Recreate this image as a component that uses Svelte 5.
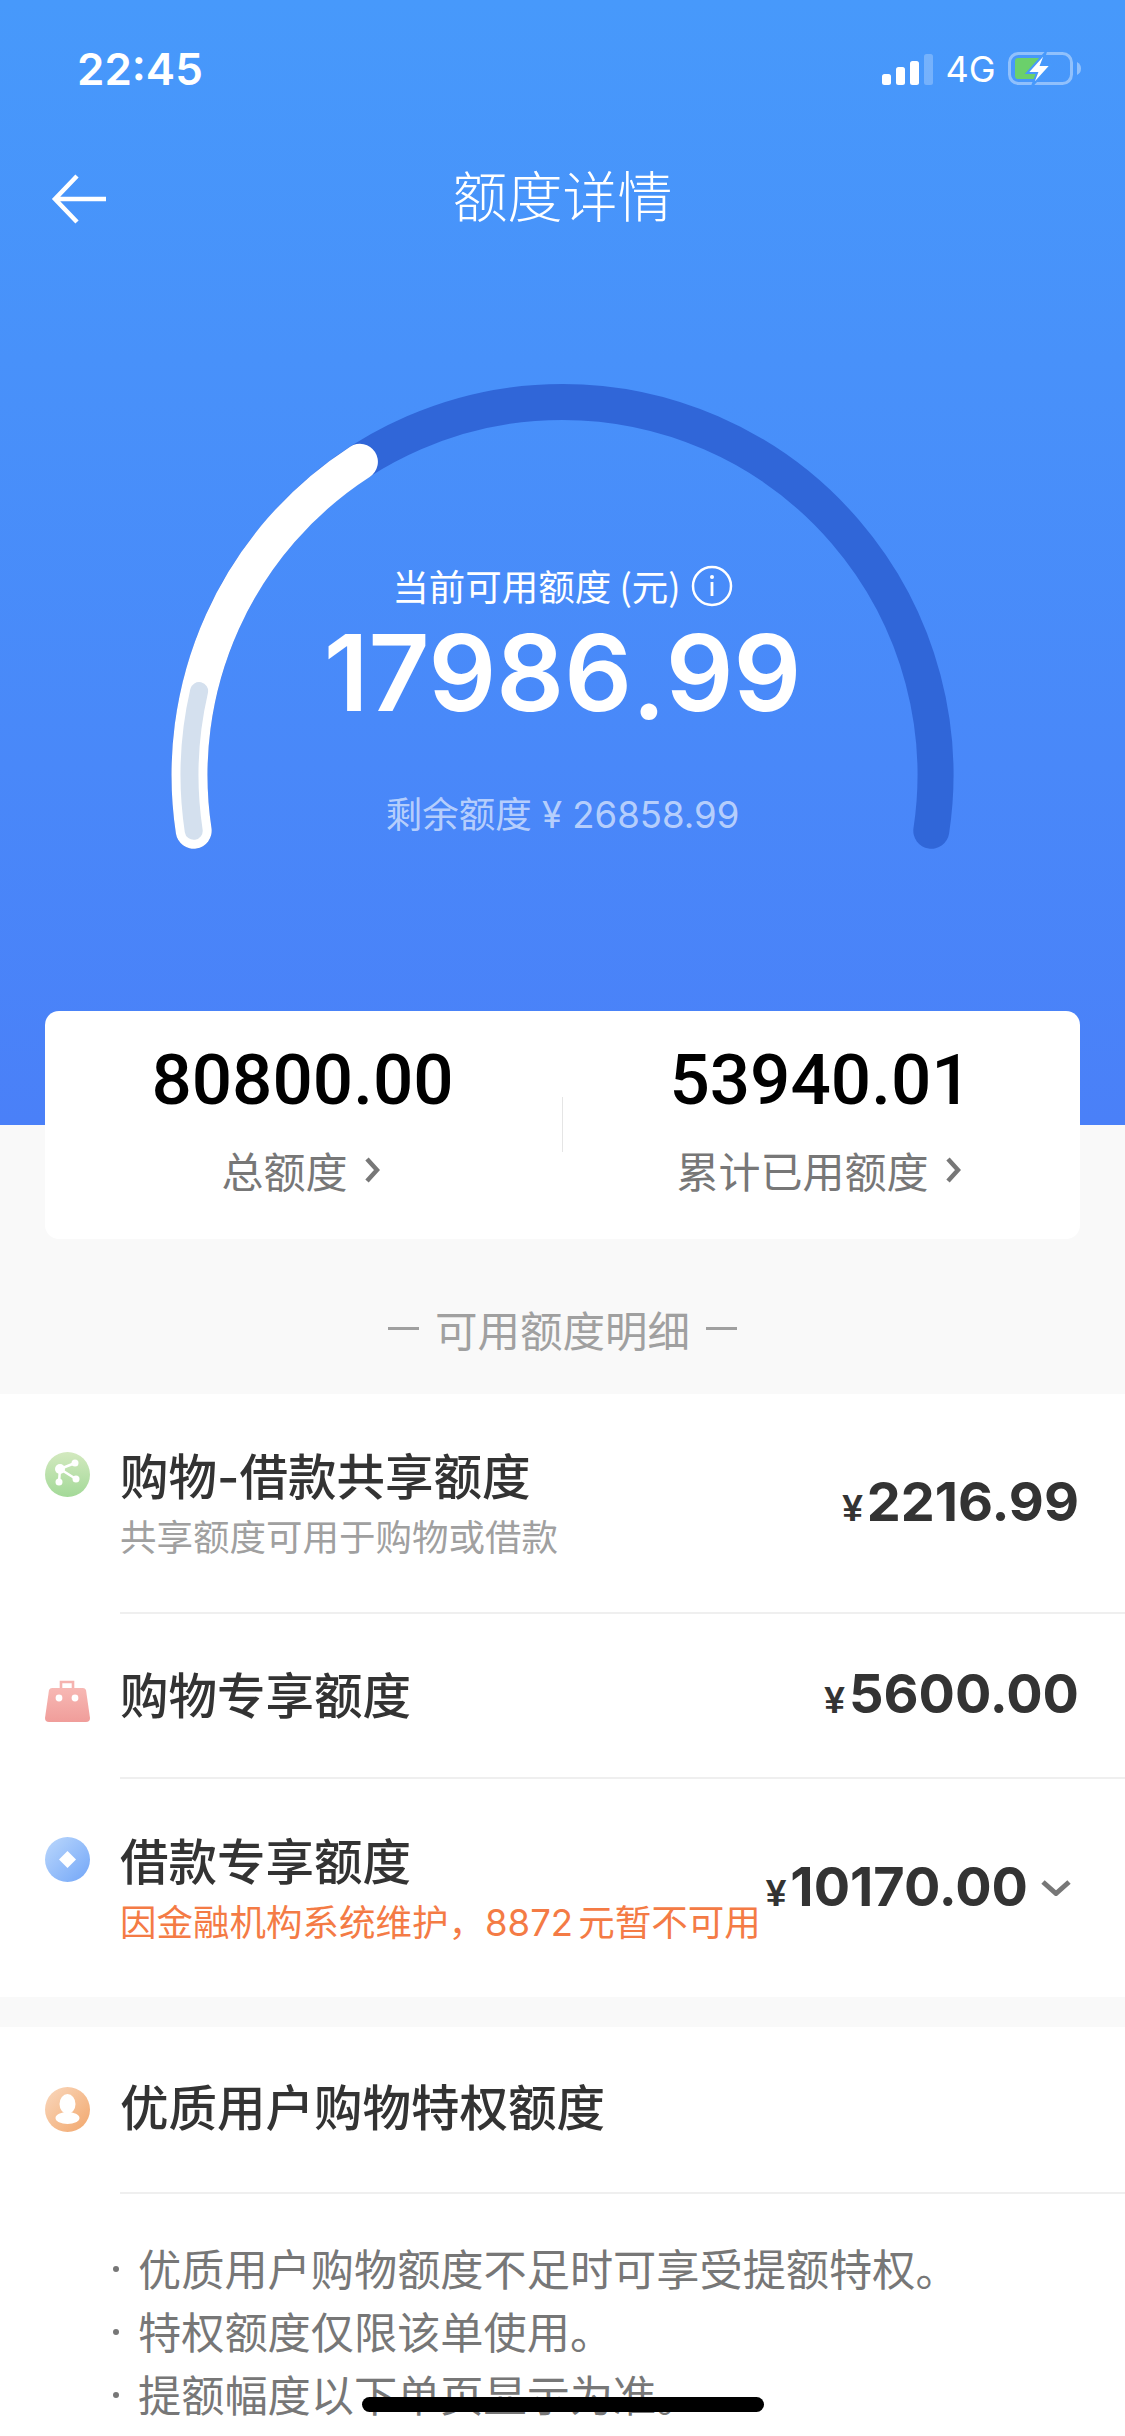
<script>
  const cx = 562.5;
  const cy = 775;
  const r = 373;

  // point on the gauge ring, angle in degrees from the left horizontal, clockwise
  function pt(deg) {
    const a = (deg * Math.PI) / 180;
    return `${(cx - r * Math.cos(a)).toFixed(1)} ${(cy - r * Math.sin(a)).toFixed(1)}`;
  }
  function arc(from, to) {
    const large = to - from > 180 ? 1 : 0;
    return `M${pt(from)} A${r} ${r} 0 ${large} 1 ${pt(to)}`;
  }

  const bullets = ["优质用户购物额度不足时可享受提额特权。", "特权额度仅限该单使用。", "提额幅度以下单页显示为准。"];
</script>

<div class="page">
  <section class="hero">
    <div class="status">
      <span class="time">22:45</span>
      <div class="status-right">
        <svg class="signal" width="51" height="31" viewBox="0 0 51 31">
          <rect x="0" y="20" width="9" height="11" rx="2.5" fill="#fff" />
          <rect x="14" y="13" width="9" height="18" rx="2.5" fill="#fff" />
          <rect x="28" y="7" width="9" height="24" rx="2.5" fill="#fff" />
          <rect x="42" y="0" width="9" height="31" rx="2.5" fill="#fff" opacity="0.25" />
        </svg>
        <span class="net">4G</span>
        <svg class="battery" width="73" height="36" viewBox="0 0 73 36">
          <rect x="1.5" y="2.5" width="62" height="30" rx="9" fill="none" stroke="#fff" stroke-opacity="0.4" stroke-width="3" />
          <path d="M69 11 Q73 13 73 17.5 Q73 22 69 24 Z" fill="#fff" opacity="0.4" />
          <rect x="7" y="7" width="26" height="21" rx="3" fill="#6bd06b" />
          <path d="M38 1 L19 22 L29 22 L24 35 L43 14 L33 14 Z" fill="#fff" stroke="#4799fb" stroke-width="2" />
        </svg>
      </div>
    </div>

    <div class="nav">
      <svg class="back" width="56" height="50" viewBox="0 0 56 50">
        <path d="M26 2 L4 25 L26 48 M4 25 H55" fill="none" stroke="#fff" stroke-width="4.5" />
      </svg>
      <h1>额度详情</h1>
    </div>

    <div class="gauge">
      <svg class="ring" width="1125" height="500" viewBox="0 350 1125 500">
        <path d={arc(-8.6, 188.6)} fill="none" stroke="#3066d8" stroke-width="36" stroke-linecap="round" />
        <path d={arc(-8.6, 57.1)} fill="none" stroke="#fff" stroke-width="36" stroke-linecap="round" />
        <path d={arc(-8.6, 13)} fill="none" stroke="#d4e0ee" stroke-width="18" stroke-linecap="round" />
      </svg>
      <div class="readout">
        <div class="label">
          <span>当前可用额度 (元)</span>
          <svg width="42" height="42" viewBox="0 0 42 42">
            <circle cx="21" cy="21" r="19" fill="none" stroke="#fff" stroke-width="2.5" />
            <circle cx="21" cy="12" r="2" fill="#fff" />
            <rect x="19.6" y="17" width="2.8" height="14" fill="#fff" />
          </svg>
        </div>
        <div class="big">17986<span class="dot">.</span>99</div>
        <div class="left">剩余额度 ¥ 26858.99</div>
      </div>
    </div>
  </section>

  <div class="summary">
    <div class="cell">
      <div class="num">80800.00</div>
      <div class="cap">总额度
        <svg width="16" height="26" viewBox="0 0 16 26"><path d="M3 2 L13 13 L3 24" fill="none" stroke="#777" stroke-width="4.5" /></svg>
      </div>
    </div>
    <div class="rule"></div>
    <div class="cell">
      <div class="num">53940.01</div>
      <div class="cap">累计已用额度
        <svg width="16" height="26" viewBox="0 0 16 26"><path d="M3 2 L13 13 L3 24" fill="none" stroke="#777" stroke-width="4.5" /></svg>
      </div>
    </div>
  </div>

  <div class="heading"><i></i>可用额度明细<i></i></div>

  <section class="panel">
    <div class="row first">
      <svg class="icon" width="45" height="45" viewBox="0 0 45 45">
        <defs><linearGradient id="g1" x1="0" y1="0" x2="0" y2="1"><stop offset="0" stop-color="#d3e9bf" /><stop offset="1" stop-color="#a3d998" /></linearGradient></defs>
        <circle cx="22.5" cy="22.5" r="22.5" fill="url(#g1)" />
        <path d="M15 17 L30 11 M15 17 L31 27 M15 17 L14 30" stroke="#fff" stroke-width="2.5" />
        <circle cx="15" cy="17" r="5" fill="#fff" /><circle cx="30" cy="11" r="3.5" fill="#fff" />
        <circle cx="31" cy="27" r="3.5" fill="#fff" /><circle cx="14" cy="30" r="3.5" fill="#fff" />
      </svg>
      <div class="body">
        <div class="text">
          <div class="title">购物-借款共享额度</div>
          <div class="sub">共享额度可用于购物或借款</div>
        </div>
        <div class="amount"><small>¥</small>2216.99</div>
      </div>
    </div>

    <div class="row second">
      <svg class="icon" width="45" height="43" viewBox="0 0 45 43">
        <defs><linearGradient id="g2" x1="0" y1="0" x2="0" y2="1"><stop offset="0" stop-color="#f7b8b4" /><stop offset="1" stop-color="#f09d9a" /></linearGradient></defs>
        <path d="M16 9 V2 H28 V9" fill="none" stroke="#f5b3af" stroke-width="2.6" />
        <path d="M7 8 H38 Q40 8 41 10 L45 38 Q45 42 41 42 H4 Q0 42 0 38 L4 10 Q5 8 7 8 Z" fill="url(#g2)" />
        <circle cx="14" cy="18" r="3.4" fill="#fff" /><circle cx="30" cy="18" r="3.4" fill="#fff" />
      </svg>
      <div class="body">
        <div class="text"><div class="title">购物专享额度</div></div>
        <div class="amount"><small>¥</small>5600.00</div>
      </div>
    </div>

    <div class="row third">
      <svg class="icon" width="45" height="45" viewBox="0 0 45 45">
        <defs><linearGradient id="g3" x1="0" y1="0" x2="1" y2="1"><stop offset="0" stop-color="#bcd8fc" /><stop offset="1" stop-color="#72a6f8" /></linearGradient></defs>
        <circle cx="22.5" cy="22.5" r="22.5" fill="url(#g3)" />
        <path d="M22.5 14 L31 22.5 L22.5 31 L14 22.5 Z" fill="#fff" />
      </svg>
      <div class="body">
        <div class="text">
          <div class="title">借款专享额度</div>
          <div class="sub warn">因金融机构系统维护，8872 元暂不可用</div>
        </div>
        <div class="amount"><small>¥</small>10170.00</div>
        <svg class="caret" width="30" height="16" viewBox="0 0 30 16"><path d="M2 2 L15 13.5 L28 2" fill="none" stroke="#777" stroke-width="5" /></svg>
      </div>
    </div>
  </section>

  <section class="panel privilege">
    <div class="row head">
      <svg class="icon" width="45" height="45" viewBox="0 0 45 45">
        <defs><linearGradient id="g4" x1="0" y1="0" x2="1" y2="1"><stop offset="0" stop-color="#f9d8be" /><stop offset="1" stop-color="#f2a76c" /></linearGradient></defs>
        <circle cx="22.5" cy="22.5" r="22.5" fill="url(#g4)" />
        <ellipse cx="22.5" cy="17" rx="8" ry="10" fill="#fff" />
        <ellipse cx="22.5" cy="31" rx="12" ry="6" fill="#fff" />
      </svg>
      <div class="title">优质用户购物特权额度</div>
    </div>
    <ul>
      {#each bullets as b}
        <li>{b}</li>
      {/each}
    </ul>
  </section>

  <div class="home"></div>
</div>

<style>
  :global(body) {
    margin: 0;
    background: #f9f9f9;
  }

  .page {
    position: relative;
    width: 1125px;
    height: 2436px;
    overflow: hidden;
    font-family: "Noto Sans CJK SC", sans-serif;
    background: #f9f9f9;
  }

  .hero {
    height: 1125px;
    background: linear-gradient(#4799fb, #4a80f8);
    color: #fff;
  }

  .status {
    display: flex;
    justify-content: space-between;
    align-items: center;
    height: 40px;
    padding: 49px 44px 0 77px;
  }

  .time {
    font: 600 44px Inter, sans-serif;
  }

  .status-right {
    display: flex;
    align-items: center;
    gap: 12.5px;
  }

  .net {
    font: 400 36px Inter, sans-serif;
  }

  .nav {
    display: flex;
    align-items: center;
    justify-content: center;
    position: relative;
    height: 60px;
    margin-top: 74px;
  }

  .back {
    position: absolute;
    left: 51px;
    top: 11px;
  }

  h1 {
    margin: 0;
    font-size: 55px;
    font-weight: 300;
    line-height: 60px;
  }

  .gauge {
    display: grid;
    height: 500px;
    margin-top: 127px;
  }

  .ring,
  .readout {
    grid-area: 1 / 1;
  }

  .readout {
    display: flex;
    flex-direction: column;
    align-items: center;
    padding-top: 212px;
  }

  .label {
    display: flex;
    align-items: center;
    gap: 10px;
    font-size: 36.5px;
    line-height: 48px;
    height: 48px;
  }

  .big {
    font: 600 106px/110px Inter, sans-serif;
    margin-top: 8px;
  }

  .dot {
    vertical-align: -8px;
  }

  .left {
    margin-top: 56px;
    font-family: Inter, "Noto Sans CJK SC", sans-serif;
    font-size: 36.5px;
    line-height: 46px;
    color: rgba(255, 255, 255, 0.62);
  }

  .summary {
    display: flex;
    align-items: center;
    box-sizing: border-box;
    height: 228px;
    margin: -114px 45px 0;
    padding-bottom: 12px;
    background: #fff;
    border-radius: 14px;
    position: relative;
  }

  .cell {
    flex: 1;
    display: flex;
    flex-direction: column;
    align-items: center;
  }

  .rule {
    width: 1px;
    height: 55px;
    background: #e5e5e5;
    align-self: flex-start;
    margin-top: 86px;
  }

  .num {
    font: 500 71px/80px Roboto, sans-serif;
    color: #000;
    margin-right: 2px;
  }

  .cap {
    display: flex;
    align-items: center;
    gap: 16px;
    margin-top: 22px;
    font-size: 42px;
    line-height: 56px;
    color: #777;
  }

  .cap svg {
    margin-right: 6px;
  }

  .heading {
    display: flex;
    align-items: center;
    justify-content: center;
    box-sizing: border-box;
    gap: 16px;
    height: 155px;
    padding-top: 24px;
    font-size: 42.5px;
    color: #a0a0a0;
  }

  .heading i {
    width: 31px;
    height: 3px;
    background: #a0a0a0;
  }

  .panel {
    background: #fff;
  }

  .row {
    display: flex;
    padding-left: 45px;
  }

  .icon {
    flex: none;
    margin-right: 30px;
  }

  .body {
    flex: 1;
    display: flex;
    justify-content: space-between;
    align-items: center;
    padding-right: 46px;
  }

  .text {
    flex: none;
  }

  .first {
    height: 220px;
  }

  .first .icon {
    margin-top: 58px;
  }

  .first .body,
  .second .body {
    border-bottom: 2px solid #efefef;
  }

  .second {
    height: 165px;
  }

  .second .icon {
    margin-top: 66px;
  }

  .second .title {
    margin-bottom: 2px;
  }

  .head .title {
    margin-bottom: 5px;
  }

  .third {
    height: 218px;
  }

  .third .icon {
    margin-top: 58px;
  }

  .third .body {
    padding-right: 54px;
  }

  .title {
    padding-top: 4.5px;
    font-family: Inter, "Noto Sans CJK SC", sans-serif;
    font-size: 48.5px;
    font-weight: 500;
    line-height: 60px;
    color: #333;
  }

  .sub {
    margin-top: 5.5px;
    font-family: Inter, "Noto Sans CJK SC", sans-serif;
    font-size: 36.5px;
    line-height: 50px;
    color: #a0a0a0;
    white-space: nowrap;
  }

  .warn {
    color: #f47b45;
    word-spacing: -5px;
  }

  .amount {
    flex: none;
    font: 700 54px/66px Inter, sans-serif;
    color: #333;
    margin-left: auto;
    margin-bottom: 3px;
  }

  .amount small {
    font: 700 37px "Liberation Sans", sans-serif;
    margin-right: 4px;
  }

  .caret {
    flex: none;
    margin-left: 13px;
  }

  .privilege {
    margin-top: 30px;
    height: 409px;
  }

  .head {
    align-items: center;
    height: 165px;
  }

  ul {
    list-style: none;
    margin: 0 0 0 120px;
    padding: 42px 0 0;
    border-top: 2px solid #efefef;
  }

  li {
    position: relative;
    padding-left: 18px;
    font-size: 43.2px;
    line-height: 63px;
    color: #777;
  }

  li::before {
    content: "";
    position: absolute;
    left: -7px;
    top: 30px;
    width: 6px;
    height: 6px;
    border-radius: 50%;
    background: #777;
  }

  .home {
    position: absolute;
    left: 362px;
    top: 2397px;
    width: 402px;
    height: 15px;
    border-radius: 8px;
    background: #000;
  }
</style>
